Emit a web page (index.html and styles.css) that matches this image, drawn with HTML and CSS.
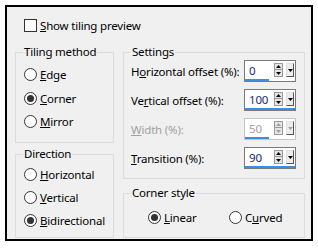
FILE: index.html
```html
<!doctype html>
<html>
<head>
<meta charset="utf-8">
<link rel="stylesheet" href="styles.css">
<title>Seamless Tiling</title>
</head>
<body>

<div class="dialog">
	<div class="check"><span class="check-box"></span><span><u>S</u>how tiling preview</span></div>

	<div class="cols">
		<div class="col-left">
			<fieldset class="group tiling">
				<legend>Tiling method</legend>
				<div class="options">
					<div class="radio"><span class="circle"></span><span><u>E</u>dge</span></div>
					<div class="radio"><span class="circle on"></span><span><u>C</u>orner</span></div>
					<div class="radio"><span class="circle"></span><span><u>M</u>irror</span></div>
				</div>
			</fieldset>
			<fieldset class="group direction">
				<legend>Direction</legend>
				<div class="options">
					<div class="radio"><span class="circle"></span><span><u>H</u>orizontal</span></div>
					<div class="radio"><span class="circle"></span><span><u>V</u>ertical</span></div>
					<div class="radio"><span class="circle on"></span><span><u>B</u>idirectional</span></div>
				</div>
			</fieldset>
		</div>

		<div class="col-right">
			<fieldset class="group settings">
				<legend>Settings</legend>
				<div class="field">
					<span class="label">H<u>o</u>rizontal offset (%):</span>
					<div class="spin">
						<div class="spin-top">
							<span class="value">0</span>
							<span class="updown"><span class="arrow"><svg width="5" height="3"><path d="M0 3h5L2.5 0z"/></svg></span><span class="arrow"><svg width="5" height="3"><path d="M0 0h5L2.5 3z"/></svg></span></span>
							<span class="drop"><svg width="5" height="3"><path d="M0 0h5L2.5 3z"/></svg></span>
						</div>
						<div class="bar" style="width:24px"></div>
					</div>
				</div>
				<div class="field">
					<span class="label">Ve<u>r</u>tical offset (%):</span>
					<div class="spin">
						<div class="spin-top">
							<span class="value">100</span>
							<span class="updown"><span class="arrow"><svg width="5" height="3"><path d="M0 3h5L2.5 0z"/></svg></span><span class="arrow"><svg width="5" height="3"><path d="M0 0h5L2.5 3z"/></svg></span></span>
							<span class="drop"><svg width="5" height="3"><path d="M0 0h5L2.5 3z"/></svg></span>
						</div>
						<div class="bar" style="width:50px"></div>
					</div>
				</div>
				<div class="field disabled">
					<span class="label"><u>W</u>idth (%):</span>
					<div class="spin">
						<div class="spin-top">
							<span class="value">50</span>
							<span class="updown"><span class="arrow"><svg width="5" height="3"><path d="M0 3h5L2.5 0z"/></svg></span><span class="arrow"><svg width="5" height="3"><path d="M0 0h5L2.5 3z"/></svg></span></span>
							<span class="drop"><svg width="5" height="3"><path d="M0 0h5L2.5 3z"/></svg></span>
						</div>
						<div class="bar" style="width:24px"></div>
					</div>
				</div>
				<div class="field">
					<span class="label"><u>T</u>ransition (%):</span>
					<div class="spin">
						<div class="spin-top">
							<span class="value">90</span>
							<span class="updown"><span class="arrow"><svg width="5" height="3"><path d="M0 3h5L2.5 0z"/></svg></span><span class="arrow"><svg width="5" height="3"><path d="M0 0h5L2.5 3z"/></svg></span></span>
							<span class="drop"><svg width="5" height="3"><path d="M0 0h5L2.5 3z"/></svg></span>
						</div>
						<div class="bar" style="width:50px"></div>
					</div>
				</div>
			</fieldset>
			<fieldset class="group corner">
				<legend>Corner style</legend>
				<div class="inline-options">
					<div class="radio linear"><span class="circle on"></span><span><u>L</u>inear</span></div>
					<div class="radio"><span class="circle"></span><span>C<u>u</u>rved</span></div>
				</div>
			</fieldset>
		</div>
	</div>
</div>

</body>
</html>
```

FILE: styles.css
```css
*
{
	box-sizing:border-box;
}
body
{
	margin:0;
	background:#fff;
	font-family:"Noto Sans", sans-serif;
	font-size:11.5px;
	letter-spacing:-0.2px;
	color:#000;
}
.dialog
{
	margin:5px;
	width:308px;
	height:236px;
	border:2px solid #000;
	background:#f0f0f0;
	padding:11px 0 0 8px;
}
.check
{
	display:flex;
	align-items:center;
	gap:3px;
	height:15px;
	margin-left:9px;
}
.check-box
{
	width:13px;
	height:13px;
	border:1px solid #333;
	background:#fff;
}
.cols
{
	display:flex;
	gap:9px;
	margin-top:11px;
}
.col-left
{
	width:99px;
	display:flex;
	flex-direction:column;
	gap:3px;
}
.col-right
{
	width:182px;
	display:flex;
	flex-direction:column;
	gap:6px;
}
.group
{
	margin:0;
	padding:0 0 0 7px;
	border:1px solid #dcdcdc;
	min-width:0;
}
.group legend
{
	padding:0 1px;
	line-height:16px;
}
.tiling
{
	height:99px;
}
.direction
{
	height:92px;
}
.settings
{
	height:135px;
}
.corner
{
	height:53px;
}
.tiling .options
{
	padding-top:3px;
}
.direction .options
{
	padding-top:1px;
}
.radio
{
	display:flex;
	align-items:center;
	gap:3px;
	height:23.5px;
	padding-left:1px;
	white-space:nowrap;
}
.direction .radio
{
	height:23px;
}
.circle
{
	width:13px;
	height:13px;
	border:1px solid #333;
	border-radius:50%;
	background:#fff;
	display:flex;
	align-items:center;
	justify-content:center;
}
.circle.on::after
{
	content:"";
	width:7px;
	height:7px;
	border-radius:50%;
	background:#333;
}
.field
{
	display:flex;
	align-items:center;
	height:22px;
	margin-bottom:7px;
}
.label
{
	width:113px;
	white-space:nowrap;
}
.spin
{
	width:52px;
	height:22px;
	border:1px solid #7a7a7a;
	background:#fff;
	display:flex;
	flex-direction:column;
}
.spin-top
{
	flex:1;
	display:flex;
	align-items:flex-start;
}
.value
{
	width:29px;
	padding:2px 0 0 4px;
	line-height:16px;
	color:#14287a;
}
.updown
{
	margin-top:2px;
	width:9px;
	display:flex;
	flex-direction:column;
}
.arrow
{
	height:7px;
	border:1px solid #9a9a9a;
	background:#e6e6e6;
	display:flex;
	align-items:center;
	justify-content:center;
}
.arrow + .arrow
{
	border-top:none;
}
.drop
{
	margin:2px 0 0 3px;
	width:8px;
	height:14px;
	border:1px solid;
	border-color:#e0e0e0 #555 #555 #e0e0e0;
	background:#ececec;
	display:flex;
	align-items:center;
	justify-content:center;
}
.bar
{
	height:3px;
	background:#3a8ee6;
}
.disabled .label,
.disabled .value
{
	color:#a0a0a0;
}
.disabled .spin
{
	border-color:#c4c4c4;
}
.disabled svg
{
	fill:#a0a0a0;
}
.inline-options
{
	display:flex;
	padding:5px 0 0 16px;
}
.linear
{
	width:81px;
}
```
